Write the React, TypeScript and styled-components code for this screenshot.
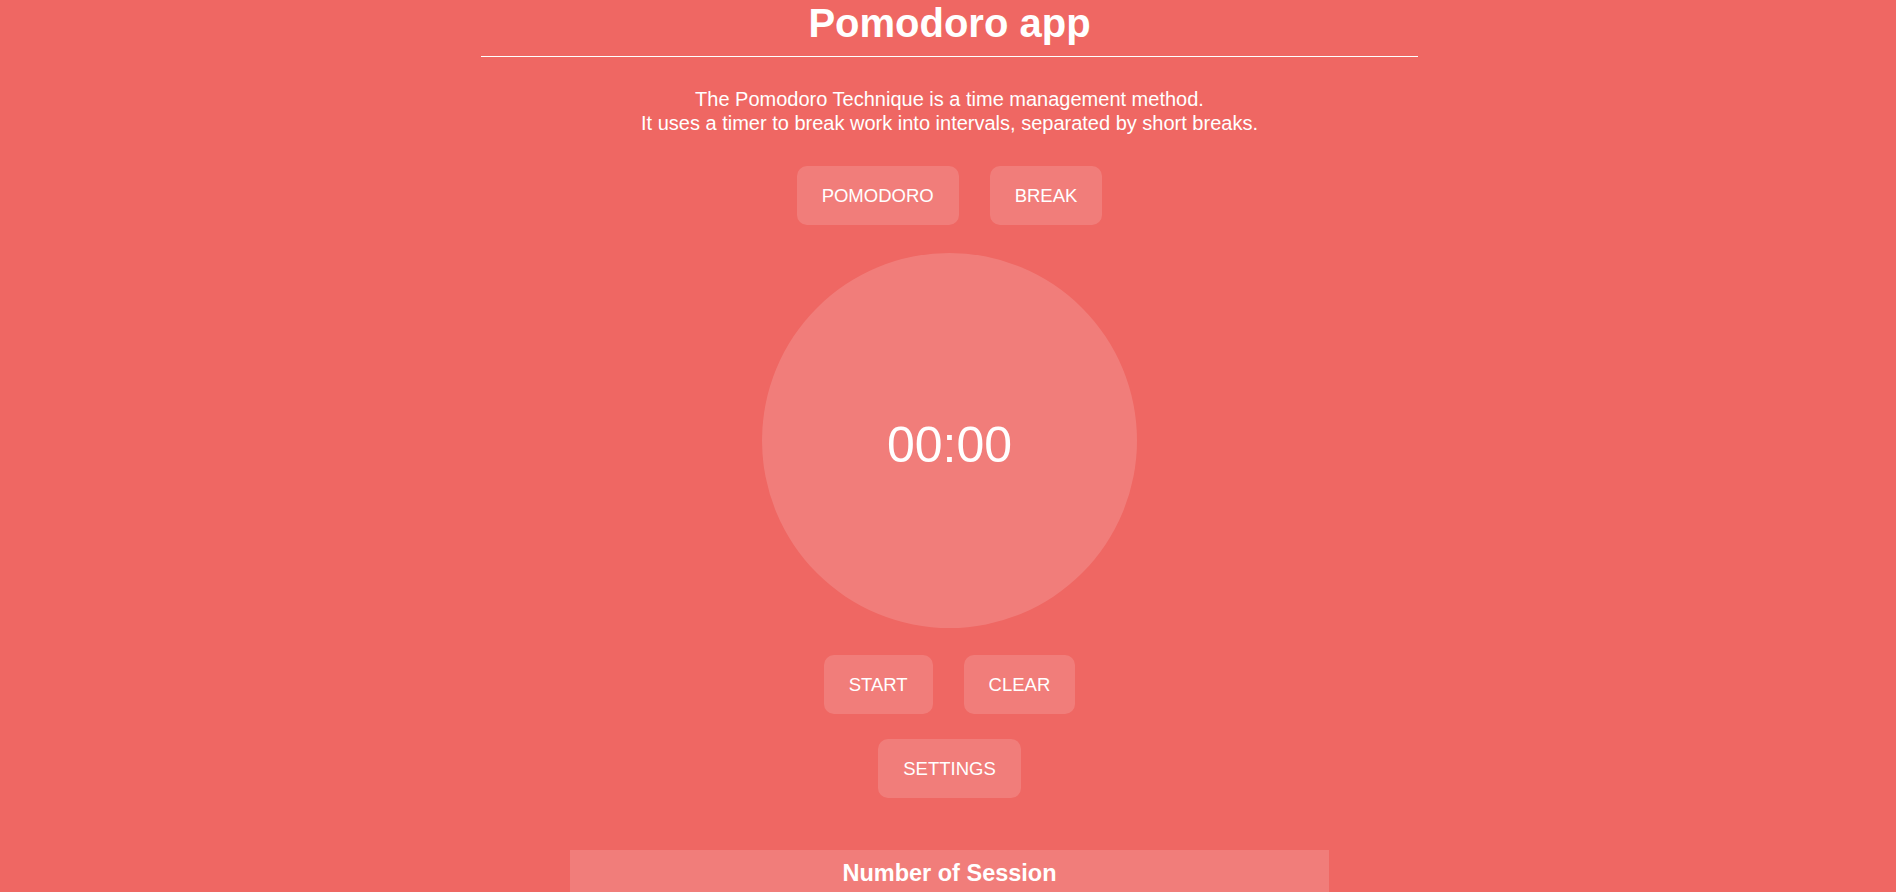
import React from "react";
import styled, { createGlobalStyle } from "styled-components";

const GlobalStyle = createGlobalStyle`
  html, body {
    margin: 0;
    padding: 0;
    background: #ef6763;
    color: #ffffff;
    font-family: "Liberation Sans", Arial, Helvetica, sans-serif;
  }
  * { box-sizing: border-box; }
`;

const Page = styled.main`
  display: flex;
  flex-direction: column;
  align-items: center;
  padding-left: 3px;
  min-height: 892px;
`;

const Title = styled.h1`
  margin: 0;
  font-size: 40px;
  line-height: 46px;
  font-weight: 700;
  text-align: center;
`;

const Rule = styled.div`
  width: 937px;
  height: 1px;
  background: #ffffff;
  margin-top: 10px;
`;

const Intro = styled.p`
  margin: 30px 0 0;
  font-size: 20px;
  line-height: 24px;
  text-align: center;
`;

const ButtonRow = styled.div<{ $top: number }>`
  display: flex;
  justify-content: center;
  gap: 31px;
  margin-top: ${(p) => p.$top}px;
`;

const Button = styled.button`
  border: none;
  outline: none;
  background: rgba(255, 255, 255, 0.15);
  color: #ffffff;
  font-family: "Liberation Sans", Arial, Helvetica, sans-serif;
  font-size: 18.5px;
  line-height: 21px;
  padding: 19px 25px;
  border-radius: 10px;
  cursor: pointer;
  text-transform: uppercase;
`;

const Clock = styled.div`
  width: 375px;
  height: 375px;
  border-radius: 50%;
  background: rgba(255, 255, 255, 0.15);
  display: flex;
  align-items: center;
  justify-content: center;
  margin-top: 28px;
  padding-top: 8px;
  font-size: 50px;
  line-height: 1;
`;

const Sessions = styled.section`
  width: 759px;
  margin-top: 52px;
  background: rgba(255, 255, 255, 0.15);
  padding: 9px 16px 24px;
  min-height: 120px;
`;

const SessionTitle = styled.h2`
  margin: 0;
  font-size: 23.5px;
  line-height: 28px;
  font-weight: 700;
  text-align: center;
`;

const SessionCount = styled.p`
  margin: 12px 0 0;
  font-size: 20px;
  text-align: center;
`;

export default function App() {
  return (
    <>
      <GlobalStyle />
      <Page>
        <Title>Pomodoro app</Title>
        <Rule />
        <Intro>
          The Pomodoro Technique is a time management method.
          <br />
          It uses a timer to break work into intervals, separated by short breaks.
        </Intro>
        <ButtonRow $top={31}>
          <Button>Pomodoro</Button>
          <Button>Break</Button>
        </ButtonRow>
        <Clock>00:00</Clock>
        <ButtonRow $top={27}>
          <Button>Start</Button>
          <Button>Clear</Button>
        </ButtonRow>
        <ButtonRow $top={25}>
          <Button>Settings</Button>
        </ButtonRow>
        <Sessions>
          <SessionTitle>Number of Session</SessionTitle>
          <SessionCount>0</SessionCount>
        </Sessions>
      </Page>
    </>
  );
}
